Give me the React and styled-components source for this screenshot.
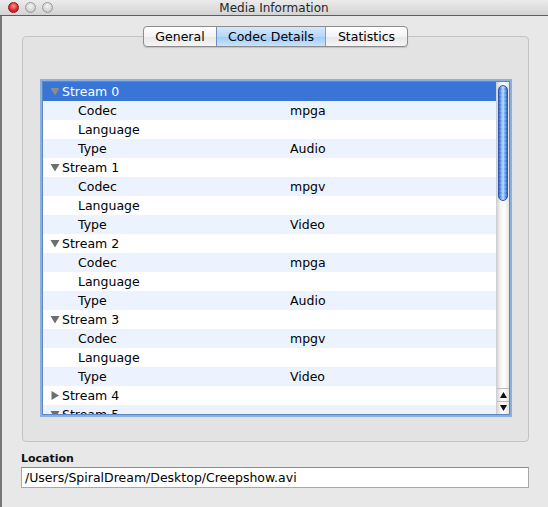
import React from "react";
import styled, { createGlobalStyle } from "styled-components";

const GlobalStyle = createGlobalStyle`
  html, body { margin: 0; padding: 0; background: #e8e8e8; }
  body { font-family: "DejaVu Sans", "Liberation Sans", sans-serif; }
  * { box-sizing: border-box; }
`;

const Window = styled.div`
  width: 548px;
  height: 507px;
  display: flex;
  flex-direction: column;
  background: #e8e8e8;
  overflow: hidden;
`;

const TitleBar = styled.div`
  height: 16px;
  flex: none;
  position: relative;
  display: flex;
  align-items: center;
  justify-content: center;
  background: linear-gradient(#ebebeb, #d3d3d3);
  border-bottom: 1px solid #5e5e5e;
  font-size: 12px;
  color: #262626;
`;

const Lights = styled.div`
  position: absolute;
  left: 8px;
  top: 2px;
  display: flex;
  gap: 6px;
`;

const Light = styled.span`
  width: 11px;
  height: 11px;
  border-radius: 50%;
  background: ${(p) =>
    p.$red
      ? "radial-gradient(circle at 50% 35%, #ff9a9a 0%, #e8262b 55%, #9c1015 100%)"
      : "radial-gradient(circle at 50% 35%, #f4f4f4 0%, #d4d4d4 60%, #b4b4b4 100%)"};
  border: 1px solid ${(p) => (p.$red ? "#8a1a1a" : "#9a9a9a")};
`;

const Body = styled.div`
  flex: 1;
  display: flex;
  flex-direction: column;
  padding: 10px 19px 0 20px;
  border-left: 2px solid #777;
`;

const TabsRow = styled.div`
  display: flex;
  justify-content: center;
  position: relative;
  z-index: 1;
`;

const Segmented = styled.div`
  display: flex;
  height: 21px;
  border: 1px solid #8c8c8c;
  border-radius: 4px;
  overflow: hidden;
  background: linear-gradient(#ffffff, #f3f3f3 50%, #e6e6e6 51%, #f5f5f5);
  box-shadow: 0 1px 1px rgba(0, 0, 0, 0.15);
`;

const Tab = styled.div`
  width: ${(p) => p.$w}px;
  display: flex;
  align-items: center;
  justify-content: center;
  font-size: 12.5px;
  color: #000;
  border-left: ${(p) => (p.$first ? "none" : "1px solid #9a9a9a")};
  background: ${(p) =>
    p.$active
      ? "linear-gradient(#d4e8fd, #b6d7fb 50%, #9dcaf9 51%, #c9e3fd)"
      : "transparent"};
  ${(p) => (p.$active ? "border-color: #6b8fbf;" : "")}
`;

const Panel = styled.div`
  margin-top: -11px;
  height: 406px;
  border: 1px solid #c4c4c4;
  border-radius: 4px;
  background: #e3e3e3;
  padding: 42px 16px 0 17px;
`;

const ListFrame = styled.div`
  height: 334px;
  border: 1px solid #5c86c4;
  box-shadow: 0 0 0 2px #8bb0e0;
  margin: 2px;
  display: flex;
  background: #fff;
  overflow: hidden;
`;

const Rows = styled.div`
  flex: 1;
  overflow: hidden;
`;

const Row = styled.div`
  height: 19px;
  display: flex;
  align-items: center;
  font-size: 12.5px;
  color: ${(p) => (p.$selected ? "#fff" : "#000")};
  background: ${(p) =>
    p.$selected ? "#3875d7" : p.$alt ? "#edf3fe" : "#ffffff"};
`;

const Disclosure = styled.span`
  width: 19px;
  padding-left: 7px;
  display: flex;
  align-items: center;
  flex: none;
`;

const Label = styled.span`
  width: 228px;
  padding-left: ${(p) => (p.$child ? 16 : 0)}px;
  flex: none;
  white-space: nowrap;
`;

const Value = styled.span`
  white-space: nowrap;
`;

const Scrollbar = styled.div`
  width: 13px;
  flex: none;
  display: flex;
  flex-direction: column;
  background: linear-gradient(90deg, #d6d6d6, #f4f4f4 30%, #ffffff 60%, #e4e4e4);
  border-left: 1px solid #cfcfcf;
`;

const Track = styled.div`
  flex: 1;
  padding: 3px 1px 0 1px;
`;

const Thumb = styled.div`
  height: 116px;
  border-radius: 6px;
  border: 1px solid #2a58b4;
  background:
    repeating-linear-gradient(0deg, rgba(255,255,255,0.12) 0 2px, rgba(255,255,255,0) 2px 4px),
    linear-gradient(90deg, #2f62c6, #6aa2ee 25%, #b7dcff 50%, #6aa2ee 75%, #2f62c6);
`;

const ArrowBtn = styled.div`
  height: 13px;
  display: flex;
  align-items: center;
  justify-content: center;
  border-top: 1px solid #bdbdbd;
`;

const Location = styled.div`
  display: flex;
  flex-direction: column;
  margin-top: 10px;
  margin-left: -1px;
`;

const LocLabel = styled.div`
  font-size: 11px;
  font-weight: bold;
  color: #111;
  height: 15px;
`;

const Field = styled.div`
  height: 21px;
  background: #fff;
  border: 1px solid #a8a8a8;
  border-top-color: #8a8a8a;
  padding-left: 3px;
  display: flex;
  align-items: center;
  font-size: 12.5px;
  color: #000;
`;

const Tri = ({ open, color }) => (
  <svg width="10" height="9" viewBox="0 0 10 9">
    {open ? (
      <polygon points="0.5,1 9.5,1 5,8.5" fill={color} />
    ) : (
      <polygon points="1.5,0 9,4.5 1.5,9" fill={color} />
    )}
  </svg>
);

const streams = [
  { n: 0, codec: "mpga", type: "Audio", open: true },
  { n: 1, codec: "mpgv", type: "Video", open: true },
  { n: 2, codec: "mpga", type: "Audio", open: true },
  { n: 3, codec: "mpgv", type: "Video", open: true },
  { n: 4, open: false },
  { n: 5, open: true },
];

const buildRows = () => {
  const rows = [];
  streams.forEach((s) => {
    rows.push({ kind: "stream", label: `Stream ${s.n}`, open: s.open });
    if (s.open && s.codec) {
      rows.push({ kind: "child", label: "Codec", value: s.codec });
      rows.push({ kind: "child", label: "Language", value: "" });
      rows.push({ kind: "child", label: "Type", value: s.type });
    }
  });
  return rows;
};

export default function App() {
  const rows = buildRows();
  return (
    <>
      <GlobalStyle />
      <Window>
        <TitleBar>
          <Lights>
            <Light $red />
            <Light />
            <Light />
          </Lights>
          Media Information
        </TitleBar>
        <Body>
          <TabsRow>
            <Segmented>
              <Tab $w={72} $first>General</Tab>
              <Tab $w={109} $active>Codec Details</Tab>
              <Tab $w={82}>Statistics</Tab>
            </Segmented>
          </TabsRow>
          <Panel>
            <ListFrame>
              <Rows>
                {rows.map((r, i) => {
                  const selected = i === 0;
                  return (
                    <Row key={i} $selected={selected} $alt={i % 2 === 1}>
                      <Disclosure>
                        {r.kind === "stream" && (
                          <Tri open={r.open} color={selected ? "#8c8c8c" : "#6e6e6e"} />
                        )}
                      </Disclosure>
                      <Label $child={r.kind === "child"}>{r.label}</Label>
                      {r.value ? <Value>{r.value}</Value> : null}
                    </Row>
                  );
                })}
              </Rows>
              <Scrollbar>
                <Track>
                  <Thumb />
                </Track>
                <ArrowBtn>
                  <svg width="7" height="6" viewBox="0 0 7 6">
                    <polygon points="3.5,0 7,6 0,6" fill="#111" />
                  </svg>
                </ArrowBtn>
                <ArrowBtn>
                  <svg width="7" height="6" viewBox="0 0 7 6">
                    <polygon points="0,0 7,0 3.5,6" fill="#111" />
                  </svg>
                </ArrowBtn>
              </Scrollbar>
            </ListFrame>
          </Panel>
          <Location>
            <LocLabel>Location</LocLabel>
            <Field>/Users/SpiralDream/Desktop/Creepshow.avi</Field>
          </Location>
        </Body>
      </Window>
    </>
  );
}
